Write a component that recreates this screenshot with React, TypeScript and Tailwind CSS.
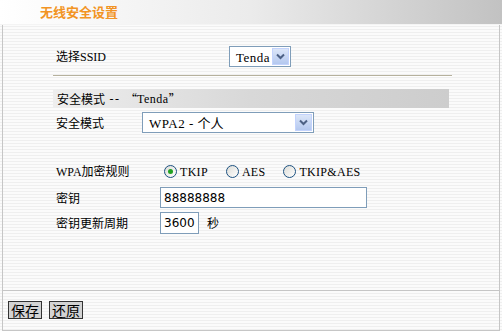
import React from 'react';

const cjk = "font-['SimSun','Noto_Sans_CJK_SC',serif]";

// SimSun draws its latin letters as a thin serif; Liberation Serif is the nearest look
function L({ children, t = '' }: { children: React.ReactNode; t?: string }) {
  return <span className={`font-['Liberation_Serif',serif] ${t}`}>{children}</span>;
}

function Select({ children, width }: { children: React.ReactNode; width: string }) {
  return (
    <div className={`flex h-[21px] items-center border border-[#7f9db9] bg-white pl-[6px] pr-[1px] ${width}`}>
      <span className="flex-1 text-[13px] leading-none text-black">{children}</span>
      <span className="flex h-[17px] w-[17px] items-center justify-center border border-[#c3d3fd] bg-gradient-to-b from-[#dce6f8] to-[#b4c8ef]">
        <svg width="9" height="7" viewBox="0 0 9 7">
          <path d="M1 1.5 L4.5 5 L8 1.5" fill="none" stroke="#4d6185" strokeWidth="2" />
        </svg>
      </span>
    </div>
  );
}

function Radio({ label, checked }: { label: string; checked?: boolean }) {
  return (
    <div className="flex items-center gap-[3px]">
      <span className="flex h-[13px] w-[13px] items-center justify-center rounded-full border border-[#1c5180] bg-gradient-to-br from-[#dcdcd7] to-white">
        {checked && <span className="h-[5px] w-[5px] rounded-full bg-[#21a121]" />}
      </span>
      <span className="text-[12px] leading-none text-black">
        <L t="tracking-[0.3px]">{label}</L>
      </span>
    </div>
  );
}

export default function App() {
  return (
    <div
      className={`flex h-[331px] w-[502px] flex-col bg-[repeating-linear-gradient(to_bottom,#fbfbfb_0px,#fbfbfb_2px,#efefef_2px,#efefef_3px)] ${cjk}`}
    >
      <div className="flex h-[25px] items-center border-b border-[#f4f4f4] bg-gradient-to-r from-white via-[#ebebeb] to-[#c2c2c2] pl-[40px]">
        <span className="font-['Noto_Sans_CJK_SC',sans-serif] text-[13px] font-bold text-[#f29424]">无线安全设置</span>
      </div>
      <div className="mx-[2px] flex flex-1 flex-col border-x border-b border-[#c6c6c6]">
        <div className="flex flex-1 flex-col pl-[50px] text-[12px] text-black">
          <div className="mt-[21px] flex items-center">
            <span className="w-[176px] pl-[3px]">
              选择<L>SSID</L>
            </span>
            <Select width="w-[62px]">
              <L t="tracking-[0.5px]">Tenda</L>
            </Select>
          </div>
          <div className="mt-[8px] mr-[47px] h-[2px] border-t border-[#b6b19d] bg-white" />
          <div className="mt-[12px] mr-[50px] flex h-[19px] items-center bg-gradient-to-r from-[#eeeeee] via-[#d8d8d8] to-[#cdcdcd] pl-[4px]">
            安全模式<L t="tracking-[1.5px]">&nbsp;--&nbsp;</L>“<L t="tracking-[0.5px]">Tenda</L>”
          </div>
          <div className="mt-[4px] flex items-center">
            <span className="w-[89px] pl-[3px]">安全模式</span>
            <Select width="w-[172px]">
              <L t="tracking-[0.5px]">WPA2 - </L>个人
            </Select>
          </div>
          <div className="mt-[29px] flex items-center">
            <span className="w-[111px] pl-[3px]">
              <L>WPA</L>加密规则
            </span>
            <div className="flex items-center gap-[18px]">
              <Radio label="TKIP" checked />
              <Radio label="AES" />
              <Radio label="TKIP&AES" />
            </div>
          </div>
          <div className="mt-[6px] flex items-center">
            <span className="w-[107px] pl-[3px]">密钥</span>
            <div className="flex h-[21px] w-[207px] items-center border border-[#7f9db9] bg-white pl-[3px] font-['DejaVu_Sans',sans-serif] text-[12px]">
              88888888
            </div>
          </div>
          <div className="mt-[4px] flex items-center">
            <span className="w-[107px] pl-[3px]">密钥更新周期</span>
            <div className="flex h-[22px] w-[39px] items-center border border-[#7f9db9] bg-white pl-[3px] font-['DejaVu_Sans',sans-serif] text-[12px]">
              3600
            </div>
            <span className="ml-[8px]">秒</span>
          </div>
        </div>
        <div className="flex h-[40px] items-start gap-[7px] border-t border-[#c6c6c6] pl-[5px] pt-[10px]">
          <button className="h-[18px] w-[34px] border border-[#333] bg-[#d3d3d3] text-[14px] leading-none text-black">保存</button>
          <button className="h-[18px] w-[34px] border border-[#333] bg-[#d3d3d3] text-[14px] leading-none text-black">还原</button>
        </div>
      </div>
    </div>
  );
}
